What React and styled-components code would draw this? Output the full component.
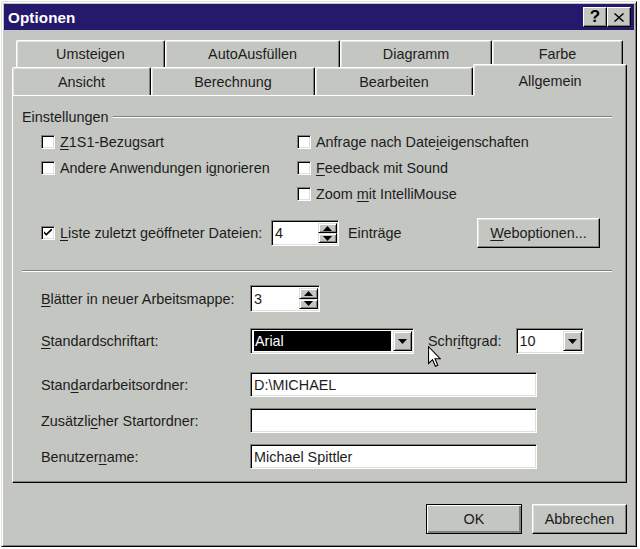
import React from 'react';
import styled, { createGlobalStyle } from 'styled-components';

const face = '#c4c6c2';
const text = '#1c1c1c';

const GlobalStyle = createGlobalStyle`
  html, body { margin: 0; padding: 0; background: #ffffff; }
  body { font-family: "Liberation Sans", Arial, sans-serif; font-size: 14.4px; color: ${text}; }
`;

const Dialog = styled.div`
  position: relative;
  box-sizing: border-box;
  width: 636px;
  height: 546px;
  margin: 1px 0 0 1px;
  padding: 2px;
  background: ${face};
  border: 1px solid;
  border-color: #dfdfdf #000 #000 #dfdfdf;
  box-shadow: inset 1px 1px #fff, inset -1px -1px #808080;
  display: flex;
  flex-direction: column;
`;

const TitleBar = styled.div`
  height: 26px;
  background: #24196b;
  display: flex;
  align-items: center;
  padding: 0 3px 0 4px;
`;

const Title = styled.div`
  flex: 1;
  color: #fff;
  font-weight: 700;
  font-size: 15.2px;
  letter-spacing: 0.1px;
`;

const TitleButton = styled.div`
  box-sizing: border-box;
  width: 24px;
  height: 20px;
  background: ${face};
  border: 1px solid;
  border-color: #fff #000 #000 #fff;
  box-shadow: inset -1px -1px #808080;
  display: flex;
  align-items: center;
  justify-content: center;
  font-weight: 700;
  font-size: 17px;
  color: #000;
`;

const Content = styled.div`
  padding: 10px 0 0 8px;
  display: flex;
  flex-direction: column;
`;

const TabStrip = styled.div`
  width: 615px;
  height: 55px;
  display: flex;
  flex-direction: column;
`;

const TabRow = styled.div`
  display: flex;
  align-items: flex-end;
  height: ${p => p.$h}px;
  padding-left: ${p => p.$indent}px;
`;

const Tab = styled.div`
  position: relative;
  box-sizing: border-box;
  width: ${p => p.$w}px;
  height: ${p => (p.$active ? '32px' : '100%')};
  margin-bottom: ${p => (p.$active ? -1 : 0)}px;
  z-index: ${p => (p.$active ? 2 : 0)};
  background: ${face};
  border-top: 1px solid #fff;
  border-left: 1px solid #fff;
  border-right: 1px solid #000;
  box-shadow: inset -1px 0 #808080, inset 1px 1px #e4e4e4;
  border-radius: 2px 2px 0 0;
  display: flex;
  align-items: center;
  justify-content: center;
  padding-top: ${p => (p.$active ? 1 : 0)}px;
`;

const Panel = styled.div`
  box-sizing: border-box;
  width: 615px;
  height: 388px;
  background: ${face};
  border: 1px solid;
  border-color: #fff #000 #000 #fff;
  box-shadow: inset -1px -1px #808080;
  padding: 13px 14px 0 9px;
  display: flex;
  flex-direction: column;
`;

const GroupHeader = styled.div`
  display: flex;
  align-items: center;
  height: 16px;
`;

const GroupLine = styled.div`
  flex: 1;
  margin-left: 5px;
  border-top: 1px solid #808080;
  border-bottom: 1px solid #fff;
`;

const CheckGrid = styled.div`
  margin-top: 4px;
  padding-left: 19px;
  display: grid;
  grid-template-columns: 256px 1fr;
  grid-auto-rows: 26px;
`;

const CheckItem = styled.label`
  display: flex;
  align-items: center;
  grid-column: ${p => p.$col};
  grid-row: ${p => p.$row};
  white-space: nowrap;
`;

const Box = styled.span`
  box-sizing: border-box;
  width: 14px;
  height: 14px;
  margin-right: 5px;
  background: #fff;
  border: 1px solid;
  border-color: #808080 #fff #fff #808080;
  box-shadow: inset 1px 1px #000, inset -1px -1px #dfdfdf;
  display: flex;
  align-items: center;
  justify-content: center;
`;

const Key = styled.span`
  text-decoration: underline;
  text-underline-offset: 2px;
`;

const ListRow = styled.div`
  margin-top: 11px;
  padding: 0 12px 0 19px;
  height: 30px;
  display: flex;
  align-items: center;
`;

const ListLabel = styled(CheckItem)`
  width: 230px;
`;

const Field = styled.div`
  box-sizing: border-box;
  width: ${p => p.$w}px;
  height: ${p => p.$h}px;
  background: #fff;
  border: 1px solid;
  border-color: #808080 #fff #fff #808080;
  box-shadow: inset 1px 1px #000, inset -1px -1px #dfdfdf;
  padding: 2px ${p => (p.$control ? 1 : 2)}px 2px 3px;
  display: flex;
  align-items: center;
`;

const FieldText = styled.span`
  flex: 1;
  white-space: nowrap;
  overflow: hidden;
`;

const Selected = styled.span`
  flex: 1;
  align-self: stretch;
  margin-right: 2px;
  background: #000;
  color: #fff;
  display: flex;
  align-items: center;
  padding-left: 1px;
`;

const Spinner = styled.div`
  width: 19px;
  align-self: stretch;
  display: flex;
  flex-direction: column;
`;

const SmallButton = styled.div`
  box-sizing: border-box;
  flex: 1;
  background: ${face};
  border: 1px solid;
  border-color: #dfdfdf #000 #000 #dfdfdf;
  box-shadow: inset 1px 1px #fff, inset -1px -1px #808080;
  display: flex;
  align-items: center;
  justify-content: center;
`;

const DropButton = styled(SmallButton)`
  flex: none;
  width: 19px;
  align-self: stretch;
`;

const After = styled.span`
  margin-left: 9px;
`;

const Button = styled.div`
  box-sizing: border-box;
  width: ${p => p.$w}px;
  height: 30px;
  background: ${face};
  border: 1px solid;
  border-color: ${p => (p.$default ? '#000' : '#fff #000 #000 #fff')};
  box-shadow: ${p =>
    p.$default
      ? 'inset 1px 1px #fff, inset -2px -2px #808080'
      : 'inset -1px -1px #808080, inset 1px 1px #dfdfdf'};
  display: flex;
  align-items: center;
  justify-content: center;
  margin-left: ${p => p.$ml || 0};
`;

const Separator = styled.div`
  margin-top: 22px;
  border-top: 1px solid #808080;
  border-bottom: 1px solid #fff;
`;

const FormRow = styled.div`
  margin-top: ${p => p.$mt}px;
  padding-left: 19px;
  display: flex;
  align-items: center;
`;

const FormLabel = styled.span`
  width: 209px;
  white-space: nowrap;
`;

const InlineLabel = styled.span`
  margin: 0 14px;
`;

const ButtonRow = styled.div`
  width: 615px;
  margin-top: 21px;
  display: flex;
  justify-content: flex-end;
`;

const Cursor = styled.svg`
  position: absolute;
  left: 426px;
  top: 344px;
`;

const Up = () => (
  <svg width="9" height="5" viewBox="0 0 9 5"><path d="M0 5 L4.5 0 L9 5 Z" fill="#000" /></svg>
);
const Down = () => (
  <svg width="9" height="5" viewBox="0 0 9 5"><path d="M0 0 L4.5 5 L9 0 Z" fill="#000" /></svg>
);

const Check = ({ checked }) => (
  <Box>
    {checked && (
      <svg width="8" height="8" viewBox="0 0 7 7">
        <path d="M0 2 L0 4 L2 6 L7 1 L7 -1 L2 4 Z" fill="#000" />
      </svg>
    )}
  </Box>
);

const Spin = ({ value, w, h }) => (
  <Field $w={w} $h={h} $control>
    <FieldText>{value}</FieldText>
    <Spinner>
      <SmallButton><Up /></SmallButton>
      <SmallButton><Down /></SmallButton>
    </Spinner>
  </Field>
);

const rowOne = [
  ['Umsteigen', 149],
  ['AutoAusfüllen', 175],
  ['Diagramm', 152],
  ['Farbe', 131],
];

const rowTwo = [
  ['Ansicht', 139],
  ['Berechnung', 164],
  ['Bearbeiten', 158],
  ['Allgemein', 154, true],
];

export default function App() {
  return (
    <>
      <GlobalStyle />
      <Dialog>
        <TitleBar>
          <Title>Optionen</Title>
          <TitleButton>?</TitleButton>
          <TitleButton>
            <svg width="10" height="9" viewBox="0 0 10 9">
              <path d="M1 0 L5 3.5 L9 0 L10 1 L6 4.5 L10 8 L9 9 L5 5.5 L1 9 L0 8 L4 4.5 L0 1 Z" fill="#000" />
            </svg>
          </TitleButton>
        </TitleBar>

        <Content>
          <TabStrip>
            <TabRow $h={27} $indent={4}>
              {rowOne.map(([label, w]) => (
                <Tab key={label} $w={w}>{label}</Tab>
              ))}
            </TabRow>
            <TabRow $h={28} $indent={0}>
              {rowTwo.map(([label, w, active]) => (
                <Tab key={label} $w={w} $active={active}>{label}</Tab>
              ))}
            </TabRow>
          </TabStrip>

          <Panel>
            <GroupHeader>
              Einstellungen
              <GroupLine />
            </GroupHeader>

            <CheckGrid>
              <CheckItem $col={1} $row={1}>
                <Check /><span><Key>Z</Key>1S1-Bezugsart</span>
              </CheckItem>
              <CheckItem $col={1} $row={2}>
                <Check /><span>Andere Anwendungen i<Key>g</Key>norieren</span>
              </CheckItem>
              <CheckItem $col={2} $row={1}>
                <Check /><span>Anfrage nach Date<Key>i</Key>eigenschaften</span>
              </CheckItem>
              <CheckItem $col={2} $row={2}>
                <Check /><span><Key>F</Key>eedback mit Sound</span>
              </CheckItem>
              <CheckItem $col={2} $row={3}>
                <Check /><span>Zoom <Key>m</Key>it IntelliMouse</span>
              </CheckItem>
            </CheckGrid>

            <ListRow>
              <ListLabel>
                <Check checked /><span><Key>L</Key>iste zuletzt geöffneter Dateien:</span>
              </ListLabel>
              <Spin value="4" w={68} h={26} />
              <After>Einträge</After>
              <Button $w={123} $ml="auto"><span><Key>W</Key>eboptionen...</span></Button>
            </ListRow>

            <Separator />

            <FormRow $mt={13}>
              <FormLabel><Key>B</Key>lätter in neuer Arbeitsmappe:</FormLabel>
              <Spin value="3" w={70} h={27} />
            </FormRow>

            <FormRow $mt={16}>
              <FormLabel><Key>S</Key>tandardschriftart:</FormLabel>
              <Field $w={164} $h={26} $control>
                <Selected>Arial</Selected>
                <DropButton><Down /></DropButton>
              </Field>
              <InlineLabel>Schr<Key>i</Key>ftgrad:</InlineLabel>
              <Field $w={68} $h={26} $control>
                <FieldText>10</FieldText>
                <DropButton><Down /></DropButton>
              </Field>
            </FormRow>

            <FormRow $mt={18}>
              <FormLabel>Stan<Key>d</Key>ardarbeitsordner:</FormLabel>
              <Field $w={287} $h={25}><FieldText>D:\MICHAEL</FieldText></Field>
            </FormRow>

            <FormRow $mt={11}>
              <FormLabel>Zusätzli<Key>c</Key>her Startordner:</FormLabel>
              <Field $w={287} $h={25} />
            </FormRow>

            <FormRow $mt={11}>
              <FormLabel>Benutzer<Key>n</Key>ame:</FormLabel>
              <Field $w={287} $h={25}><FieldText>Michael Spittler</FieldText></Field>
            </FormRow>
          </Panel>

          <ButtonRow>
            <Button $w={96} $default>OK</Button>
            <Button $w={95} $ml="10px">Abbrechen</Button>
          </ButtonRow>
        </Content>

        <Cursor width="13" height="22" viewBox="0 0 12 20">
          <path d="M0.5 0.5 L0.5 16 L4.2 12.5 L6.8 18.6 L9 17.6 L6.5 11.6 L11.3 11.6 Z" fill="#fff" stroke="#000" strokeWidth="1" />
        </Cursor>
      </Dialog>
    </>
  );
}
